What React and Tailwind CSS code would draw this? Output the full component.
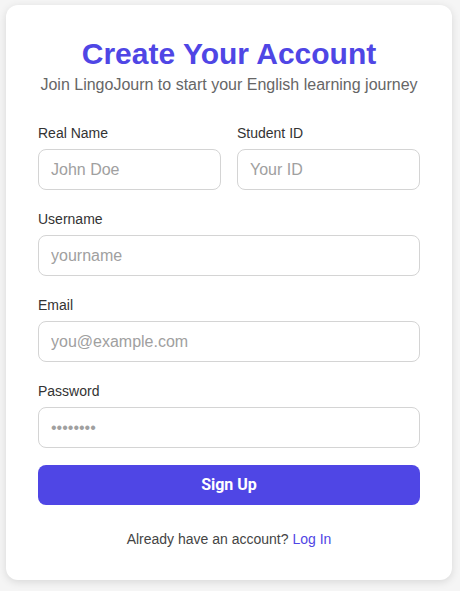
export default function App() {
  const field = (label, placeholder, type = 'text') => (
    <div className="flex flex-col">
      <label className="text-[14px] leading-[21px] text-[#333] mb-[5px]">{label}</label>
      <input
        type={type}
        placeholder={placeholder}
        className="h-[41px] w-full rounded-lg border border-[#d4d4d4] bg-white px-3 text-[16px] text-[#333] placeholder:text-[#a0a0a0] outline-none"
      />
    </div>
  );

  return (
    <div className="min-h-[591px] bg-[#f5f5f5] pt-[5px] font-['Liberation_Sans',Arial,sans-serif]">
      <div className="ml-[6px] w-[446px] rounded-xl bg-white px-8 pt-[30px] pb-[30px] shadow-[0_2px_8px_rgba(0,0,0,0.12)]">
        <h1 className="text-center text-[30px] leading-[38px] font-bold text-[#4f46e5]">Create Your Account</h1>
        <p className="text-center text-[16px] leading-6 text-[#666] mb-[26px]">
          Join LingoJourn to start your English learning journey
        </p>

        <div className="flex flex-col gap-[19px]">
          <div className="grid grid-cols-2 gap-4">
            {field('Real Name', 'John Doe')}
            {field('Student ID', 'Your ID')}
          </div>
          {field('Username', 'yourname')}
          {field('Email', 'you@example.com', 'email')}
          {field('Password', '••••••••', 'password')}
        </div>

        <button className="mt-[17px] h-10 w-full rounded-lg bg-[#4f46e5] text-[16px] font-bold text-white font-['Roboto',sans-serif]">
          Sign Up
        </button>

        <p className="mt-[24px] text-center text-[14px] leading-[21px] text-[#444]">
          Already have an account? <a className="text-[#4f46e5]">Log In</a>
        </p>
      </div>
    </div>
  );
}
